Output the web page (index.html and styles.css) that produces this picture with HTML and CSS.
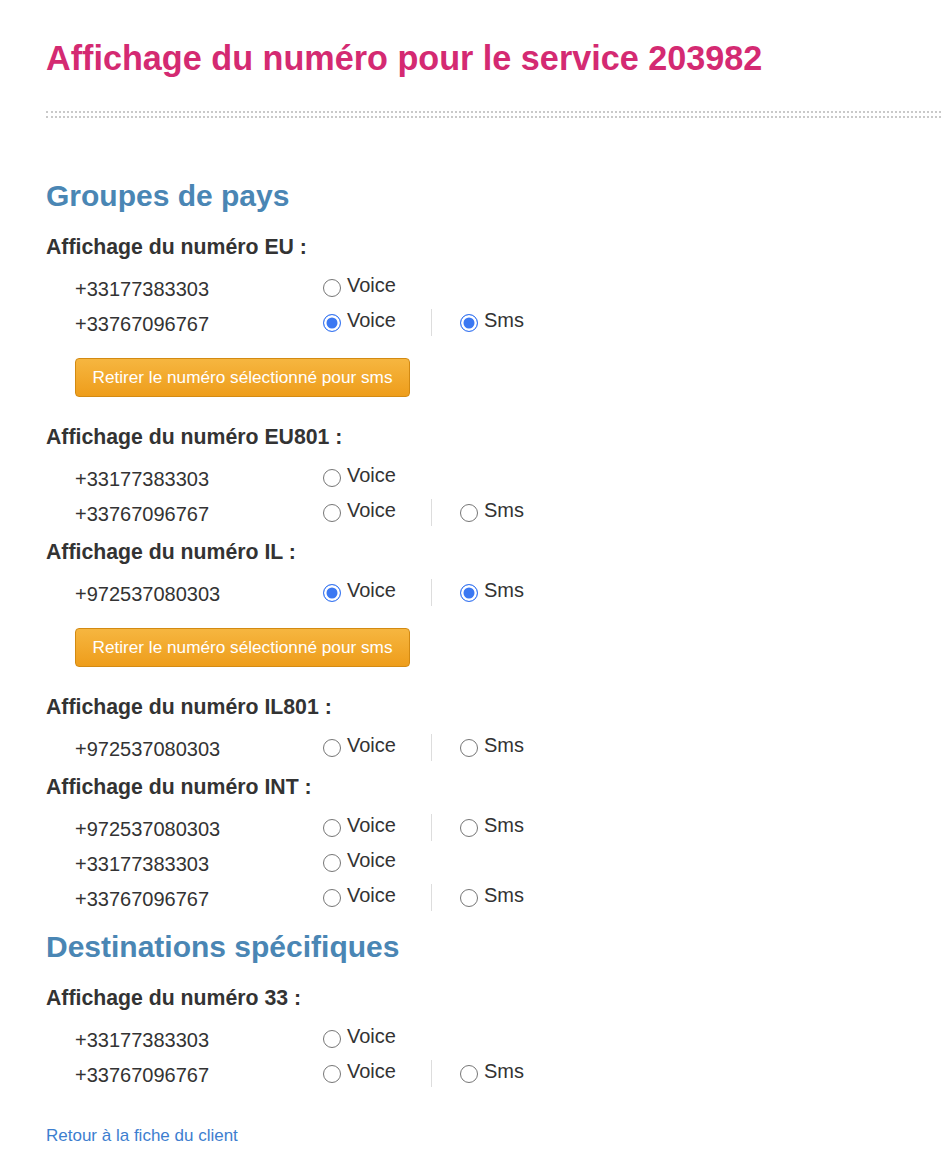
FILE: index.html
```html
<!DOCTYPE html>
<html lang="fr">
<head>
<meta charset="utf-8">
<title>Affichage du numéro</title>
<link rel="stylesheet" href="styles.css">
</head>
<body>
<div class="page">
  <h1 class="title">Affichage du numéro pour le service 203982</h1>
  <div class="rule"></div>

  <h2 class="section section-first">Groupes de pays</h2>

  <div class="group group-first">
    <h3 class="group-title">Affichage du numéro EU :</h3>
    <div class="row">
      <span class="num">+33177383303</span>
      <label class="opt"><input type="radio" class="radio" name="eu1"><span>Voice</span></label>
    </div>
    <div class="row">
      <span class="num">+33767096767</span>
      <label class="opt"><input type="radio" class="radio" name="eu2" checked><span>Voice</span></label>
      <span class="sep"></span>
      <label class="opt opt-sms"><input type="radio" class="radio" name="eu2s" checked><span>Sms</span></label>
    </div>
    <button class="btn" type="button">Retirer le numéro sélectionné pour sms</button>
  </div>

  <div class="group group-after-btn">
    <h3 class="group-title">Affichage du numéro EU801 :</h3>
    <div class="row">
      <span class="num">+33177383303</span>
      <label class="opt"><input type="radio" class="radio" name="eu801a"><span>Voice</span></label>
    </div>
    <div class="row">
      <span class="num">+33767096767</span>
      <label class="opt"><input type="radio" class="radio" name="eu801b"><span>Voice</span></label>
      <span class="sep"></span>
      <label class="opt opt-sms"><input type="radio" class="radio" name="eu801bs"><span>Sms</span></label>
    </div>
  </div>

  <div class="group">
    <h3 class="group-title">Affichage du numéro IL :</h3>
    <div class="row">
      <span class="num">+972537080303</span>
      <label class="opt"><input type="radio" class="radio" name="il" checked><span>Voice</span></label>
      <span class="sep"></span>
      <label class="opt opt-sms"><input type="radio" class="radio" name="ils" checked><span>Sms</span></label>
    </div>
    <button class="btn" type="button">Retirer le numéro sélectionné pour sms</button>
  </div>

  <div class="group group-after-btn">
    <h3 class="group-title">Affichage du numéro IL801 :</h3>
    <div class="row">
      <span class="num">+972537080303</span>
      <label class="opt"><input type="radio" class="radio" name="il801"><span>Voice</span></label>
      <span class="sep"></span>
      <label class="opt opt-sms"><input type="radio" class="radio" name="il801s"><span>Sms</span></label>
    </div>
  </div>

  <div class="group">
    <h3 class="group-title">Affichage du numéro INT :</h3>
    <div class="row">
      <span class="num">+972537080303</span>
      <label class="opt"><input type="radio" class="radio" name="int1"><span>Voice</span></label>
      <span class="sep"></span>
      <label class="opt opt-sms"><input type="radio" class="radio" name="int1s"><span>Sms</span></label>
    </div>
    <div class="row">
      <span class="num">+33177383303</span>
      <label class="opt"><input type="radio" class="radio" name="int2"><span>Voice</span></label>
    </div>
    <div class="row">
      <span class="num">+33767096767</span>
      <label class="opt"><input type="radio" class="radio" name="int3"><span>Voice</span></label>
      <span class="sep"></span>
      <label class="opt opt-sms"><input type="radio" class="radio" name="int3s"><span>Sms</span></label>
    </div>
  </div>

  <h2 class="section section-second">Destinations spécifiques</h2>

  <div class="group group-first">
    <h3 class="group-title">Affichage du numéro 33 :</h3>
    <div class="row">
      <span class="num">+33177383303</span>
      <label class="opt"><input type="radio" class="radio" name="d1"><span>Voice</span></label>
    </div>
    <div class="row">
      <span class="num">+33767096767</span>
      <label class="opt"><input type="radio" class="radio" name="d2"><span>Voice</span></label>
      <span class="sep"></span>
      <label class="opt opt-sms"><input type="radio" class="radio" name="d2s"><span>Sms</span></label>
    </div>
  </div>

  <a class="back" href="#">Retour à la fiche du client</a>
</div>
</body>
</html>
```

FILE: styles.css
```css
html, body {
  margin: 0;
  padding: 0;
  background: #ffffff;
}

body {
  font-family: "Liberation Sans", Arial, sans-serif;
  color: #333333;
}

.page {
  padding: 38px 0 40px 46px;
}

.title {
  margin: 0;
  font-size: 34.2px;
  line-height: 40px;
  font-weight: bold;
  color: #d42a72;
}

.rule {
  margin-top: 33px;
  height: 3px;
  border-top: 2px dotted #c9c9c9;
  border-bottom: 2px dotted #c9c9c9;
}

.section {
  margin: 0;
  font-size: 30px;
  line-height: 36px;
  font-weight: bold;
  color: #4a86b4;
}

.section-first {
  margin-top: 60px;
}

.section-second {
  margin-top: 14px;
}

.group {
  margin-top: 10px;
}

.group-first {
  margin-top: 21px;
}

.group-after-btn {
  margin-top: 28px;
}

.group-title {
  margin: 0 0 11px 0;
  font-size: 21.25px;
  line-height: 24px;
  font-weight: bold;
  color: #333333;
}

.row {
  display: flex;
  align-items: center;
  height: 35px;
  padding-left: 29px;
  font-size: 20px;
}

.num {
  width: 248px;
  flex: none;
  padding-top: 3px;
}

.opt {
  display: flex;
  align-items: center;
  gap: 6px;
  width: 108px;
  flex: none;
}

.opt span {
  position: relative;
  top: -2px;
}

.opt-sms {
  width: auto;
  margin-left: 28px;
}

.sep {
  width: 1px;
  height: 27px;
  background: #dddddd;
  flex: none;
}

.radio {
  appearance: none;
  -webkit-appearance: none;
  margin: 0;
  width: 18px;
  height: 18px;
  flex: none;
  border: 1.5px solid #767676;
  border-radius: 50%;
  background: #ffffff;
  box-sizing: border-box;
}

.radio:checked {
  border-color: #3b78f2;
  background: #3b78f2;
  box-shadow: inset 0 0 0 2.5px #ffffff;
}

.btn {
  display: block;
  margin: 18px 0 0 29px;
  width: 335px;
  height: 39px;
  padding: 0;
  font-family: "Liberation Sans", Arial, sans-serif;
  font-size: 17.2px;
  color: #ffffff;
  background: linear-gradient(#f6b640, #ee9d1b);
  border: 1px solid #d38a12;
  border-radius: 4px;
}

.back {
  display: block;
  margin-top: 35px;
  font-size: 17px;
  line-height: 20px;
  color: #3d7ecf;
  text-decoration: none;
}
```
